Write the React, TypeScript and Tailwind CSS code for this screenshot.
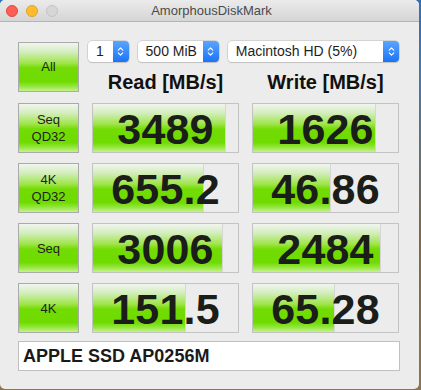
import { ChevronsUpDown } from 'lucide-react';

type Row = {
  label: string[];
  read: string;
  write: string;
  readFill: number;
  writeFill: number;
};

const ROWS: Row[] = [
  { label: ['Seq', 'QD32'], read: '3489', write: '1626', readFill: 133, writeFill: 123 },
  { label: ['4K', 'QD32'], read: '655.2', write: '46.86', readFill: 111, writeFill: 78 },
  { label: ['Seq'], read: '3006', write: '2484', readFill: 130, writeFill: 128 },
  { label: ['4K'], read: '151.5', write: '65.28', readFill: 93, writeFill: 82 },
];

const GREEN =
  'bg-[linear-gradient(to_bottom,#f1f5ef_0%,#d4eec0_18%,#9fe548_42%,#72dc04_52%,#6fdb00_80%,#93e63c_90%,#c6f28e_100%)]';

function Stepper() {
  return (
    <span className="flex h-full w-[16px] items-center justify-center rounded-r-[4px] bg-[linear-gradient(to_bottom,#5aa5ff,#1b74f5)] text-white">
      <ChevronsUpDown size={11} strokeWidth={2.4} />
    </span>
  );
}

function Select({ text, width }: { text: string; width: string }) {
  return (
    <div
      className={`flex h-[21px] ${width} items-stretch rounded-[4px] bg-white shadow-[0_0_0_0.5px_#b9b9b9,0_1px_1px_rgba(0,0,0,0.15)]`}
    >
      <span className="flex flex-1 items-center pl-[8px] text-[14px] text-[#1e1e1e]">{text}</span>
      <Stepper />
    </div>
  );
}

function LabelButton({ lines }: { lines: string[] }) {
  return (
    <div
      className={`flex h-[50px] w-[61px] flex-col items-center justify-center border border-[#aaaaaa] ${GREEN} text-[13px] leading-[17px] text-[#1f1f1f]`}
    >
      {lines.map((l) => (
        <span key={l}>{l}</span>
      ))}
    </div>
  );
}

function Meter({ value, fill }: { value: string; fill: number }) {
  return (
    <div className="relative flex h-[50px] w-[147px] items-center justify-center border border-[#c3c3c3] bg-[#ececec]">
      <div
        className={`absolute left-0 top-0 bottom-0 border-r border-[#d6d6d6] ${GREEN}`}
        style={{ width: fill }}
      />
      <span className="relative pt-[3px] text-[43px] font-bold leading-none tracking-[0.2px] text-[#1b1d18]">
        {value}
      </span>
    </div>
  );
}

export default function App() {
  return (
    <div className="h-[390px] w-[421px] bg-[linear-gradient(to_bottom,#2f6fb8_0%,#4a78a8_20%,#7d6a48_60%,#8a7550_100%)] font-['Liberation_Sans',Arial,sans-serif]">
      <div className="flex h-[389px] w-[419px] flex-col overflow-hidden rounded-[5px] bg-[#ececec]">
        {/* title bar */}
        <div className="relative flex h-[22px] shrink-0 items-center justify-center border-b border-[#b4b4b4] bg-[linear-gradient(to_bottom,#ebebeb,#d5d5d5)]">
          <div className="absolute left-[6px] top-[5px] flex gap-[8px]">
            <span className="h-[12px] w-[12px] rounded-full border border-[#e2463f] bg-[#fd5f57]" />
            <span className="h-[12px] w-[12px] rounded-full border border-[#e1a123] bg-[#febc2e]" />
            <span className="h-[12px] w-[12px] rounded-full border border-[#c4c4c4] bg-[#d6d6d6]" />
          </div>
          <span className="pl-[4px] text-[13px] text-[#4b4b4b]">AmorphousDiskMark</span>
        </div>

        {/* content */}
        <div className="grid grid-cols-[61px_147px_147px] gap-x-[13px] gap-y-[10px] pl-[18px] pt-[20px]">
          <div
            className={`flex h-[50px] w-[61px] items-center justify-center border border-[#aaaaaa] ${GREEN} text-[13px] text-[#1f1f1f]`}
          >
            All
          </div>
          <div className="col-span-2 -ml-[4px] -mt-[1px] flex flex-col">
            <div className="flex gap-[9px]">
              <Select text="1" width="w-[41px]" />
              <Select text="500 MiB" width="w-[82px]" />
              <Select text="Macintosh HD (5%)" width="w-[173px]" />
            </div>
            <div className="mt-[9px] grid grid-cols-[147px_147px] gap-x-[13px] pl-[4px]">
              <span className="text-center text-[20px] font-bold leading-[22px] text-[#111]">Read [MB/s]</span>
              <span className="text-center text-[20px] font-bold leading-[22px] text-[#111]">Write [MB/s]</span>
            </div>
          </div>

          {ROWS.map((r) => (
            <div key={r.read} className="contents">
              <LabelButton lines={r.label} />
              <Meter value={r.read} fill={r.readFill} />
              <Meter value={r.write} fill={r.writeFill} />
            </div>
          ))}
        </div>

        <div className="ml-[18px] mt-[8px] flex h-[30px] w-[382px] items-center border border-[#c0c0c0] bg-white pl-[4px] pt-[1px] text-[18px] font-bold text-[#1a1a1a]">
          APPLE SSD AP0256M
        </div>
      </div>
    </div>
  );
}
